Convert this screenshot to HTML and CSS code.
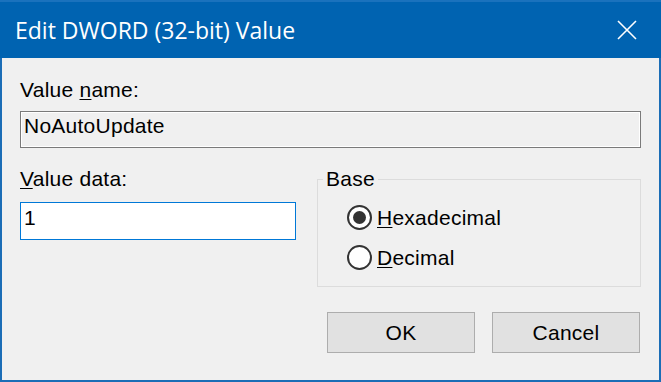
FILE: index.html
```html
<!DOCTYPE html>
<html>
<head>
<meta charset="utf-8">
<link rel="stylesheet" href="styles.css">
</head>
<body>
<div class="window">
  <div class="titlebar">
    <span class="title">Edit DWORD (32-bit) Value</span>
    <svg class="close" width="20" height="20" viewBox="0 0 20 20"><path d="M1 1 L19 19 M19 1 L1 19" stroke="#fff" stroke-width="1.6" fill="none"/></svg>
  </div>
  <div class="content">
    <div class="label first">Value <u>n</u>ame:</div>
    <div class="namebox">NoAutoUpdate</div>
    <div class="row">
      <div class="col">
        <div class="label"><u>V</u>alue data:</div>
        <div class="databox">1</div>
      </div>
      <fieldset class="group">
        <legend class="legend">Base</legend>
        <div class="radio"><span class="circle checked"></span><span class="rlabel"><u>H</u>exadecimal</span></div>
        <div class="radio"><span class="circle"></span><span class="rlabel"><u>D</u>ecimal</span></div>
      </fieldset>
    </div>
    <div class="buttons">
      <div class="btn">OK</div>
      <div class="btn">Cancel</div>
    </div>
  </div>
</div>
</body>
</html>
```
FILE: styles.css
```css
html, body {
  margin: 0;
  padding: 0;
}
body {
  width: 661px;
  height: 382px;
  overflow: hidden;
  font-family: "Liberation Sans", Arial, sans-serif;
  font-size: 21px;
  line-height: 24px;
  letter-spacing: 0.25px;
  color: #000;
}
.window {
  width: 661px;
  height: 382px;
  display: flex;
  flex-direction: column;
  box-sizing: border-box;
}
.titlebar {
  height: 58px;
  flex: none;
  box-sizing: border-box;
  background: #0063b1;
  border-top: 2px solid #1a72bd;
  display: flex;
  align-items: center;
  justify-content: space-between;
  padding-left: 15px;
  padding-right: 24px;
}
.title {
  font-family: "Open Sans", "Noto Sans", sans-serif;
  font-size: 23px;
  letter-spacing: 0;
  color: #fff;
  line-height: 26px;
  margin-top: 0;
}
.close {
  display: block;
  margin-top: 0px;
}
.content {
  flex: 1;
  background: #f0f0f0;
  border: 2px solid #1b6db6;
  border-top: none;
  padding: 0 18px;
  display: flex;
  flex-direction: column;
}
.label {
  height: 24px;
}
.label.first {
  margin-top: 20px;
}
u {
  text-decoration-thickness: 1px;
  text-underline-offset: 2px;
}
.namebox {
  margin-top: 9px;
  height: 37px;
  box-sizing: border-box;
  border: 1px solid #7a7a7a;
  box-shadow: inset 0 0 0 1px #fff;
  padding: 2px 3px;
  background: #f0f0f0;
}
.row {
  margin-top: 19px;
  display: flex;
  gap: 21px;
  align-items: flex-start;
}
.col {
  width: 276px;
  display: flex;
  flex-direction: column;
}
.databox {
  margin-top: 11px;
  height: 38px;
  box-sizing: border-box;
  border: 1px solid #0078d7;
  background: #fff;
  padding: 3px 3px;
}
.group {
  margin: 0;
  width: 324px;
  box-sizing: border-box;
  border: 1px solid #dcdcdc;
  padding: 14px 10px 16px 5px;
  display: flex;
  flex-direction: column;
  gap: 15px;
  min-width: 0;
}
.legend {
  padding: 0 3px;
  margin: 0;
  line-height: 24px;
}
.radio {
  display: flex;
  align-items: center;
  height: 25px;
  gap: 5px;
  margin-left: 24px;
}
.circle {
  width: 25px;
  height: 25px;
  box-sizing: border-box;
  border: 2px solid #333;
  border-radius: 50%;
  background: #fff;
  display: flex;
  align-items: center;
  justify-content: center;
  flex: none;
}
.circle.checked::after {
  content: "";
  width: 13px;
  height: 13px;
  border-radius: 50%;
  background: #333;
}
.buttons {
  margin-top: auto;
  margin-bottom: 27px;
  margin-right: 1px;
  display: flex;
  justify-content: flex-end;
  gap: 17px;
}
.btn {
  width: 148px;
  height: 41px;
  box-sizing: border-box;
  border: 1px solid #adadad;
  background: #e1e1e1;
  display: flex;
  align-items: center;
  justify-content: center;
}
```
